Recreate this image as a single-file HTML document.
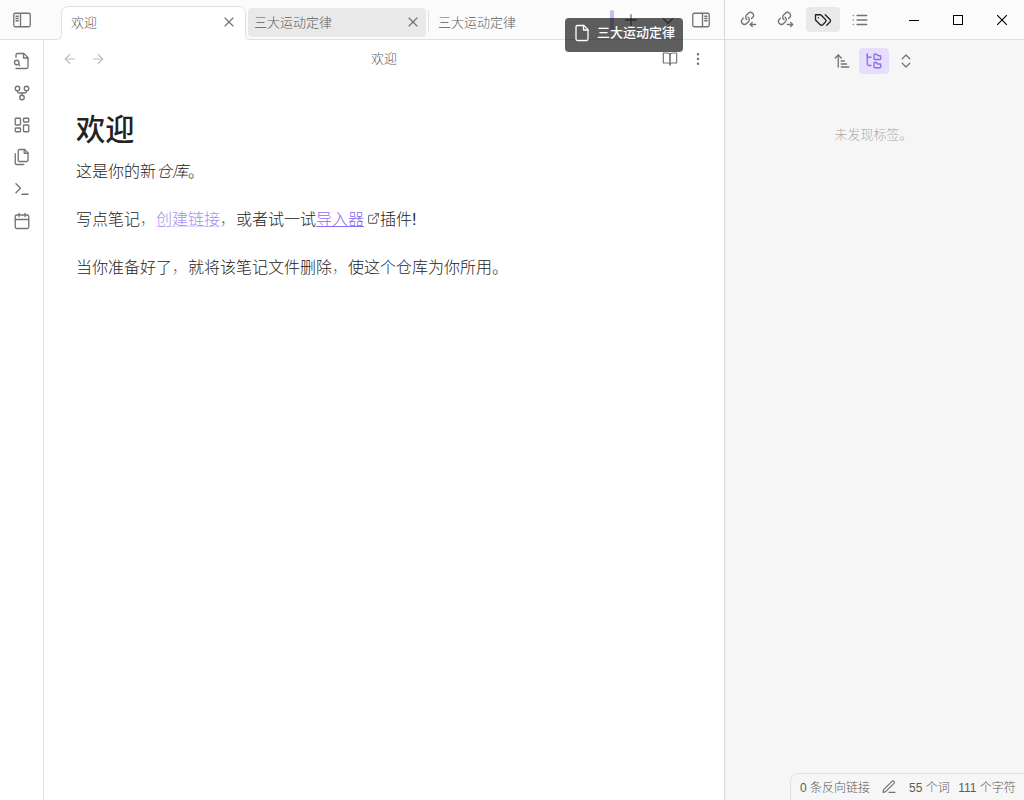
<!DOCTYPE html>
<html lang="zh-CN">
<head>
<meta charset="utf-8">
<title>欢迎 - Obsidian</title>
<style>
*{box-sizing:border-box;margin:0;padding:0}
html,body{width:1024px;height:800px;overflow:hidden;background:#fff}
body{font-family:"Liberation Sans","Noto Sans CJK SC",sans-serif;font-size:13px;font-weight:300;color:#222;position:relative;-webkit-font-smoothing:antialiased}
.abs{position:absolute}
svg.ic{position:absolute;width:18px;height:18px;fill:none;stroke:#5c5c5c;stroke-width:1.75px;stroke-linecap:round;stroke-linejoin:round;opacity:.85;overflow:visible}
svg.faint{stroke:#ababab;opacity:.8}
/* top bar */
#topbar{left:0;top:0;width:724px;height:40px;background:#fbfbfb}
#ribbon{left:0;top:40px;width:44px;height:760px;background:#fff;border-right:1px solid #e0e0e0}
.tabtxt{font-size:13px;line-height:20px;color:#5c5c5c;white-space:nowrap}
#tab2{left:248px;top:8px;width:178px;height:29px;background:#e9e9e9;border-radius:4px}
#sep{left:428px;top:10px;width:1px;height:22px;background:#e0e0e0}
/* main */
#main{left:44px;top:40px;width:680px;height:760px;background:#fff}
#vtitle{left:44px;top:49px;width:680px;text-align:center;font-size:13px;line-height:20px;color:#5c5c5c}
#h1{left:76px;top:113px;font-size:29.2px;line-height:34.6px;font-weight:500;color:#222;white-space:nowrap;letter-spacing:0}
.ln{left:76px;font-size:16px;line-height:24px;color:#222;white-space:nowrap;font-weight:300}
.ln i{font-style:italic}
.cm{font-weight:100;color:#555}
.unres{color:rgba(139,108,239,.8);text-decoration:underline;text-decoration-thickness:1px;text-decoration-color:rgba(139,108,239,.25);text-underline-offset:1px}
.ext{color:#8b6cef;text-decoration:underline;text-decoration-thickness:1px;text-underline-offset:1px}
/* right */
#rdiv{left:724px;top:0;width:1px;height:800px;background:#d9d9d9}
#rtop{left:725px;top:0;width:299px;height:40px;background:#fbfbfb;border-bottom:1px solid #e0e0e0}
#right{left:725px;top:40px;width:299px;height:760px;background:#f6f6f6}
#tagbg{left:806px;top:7px;width:34px;height:25px;border-radius:4px;background:#e9e9e9}
#treebg{left:859px;top:48px;width:30px;height:26px;border-radius:4px;background:#e6defc}
#empty{left:724px;top:125px;width:299px;text-align:center;font-size:13px;line-height:20px;color:#ababab}
/* status */
#status{left:790px;top:773px;width:240px;height:30px;background:#f6f6f6;border:1px solid #e0e0e0;border-radius:8px 0 0 0}
.st{top:779px;font-size:12px;line-height:18px;color:#5c5c5c;white-space:nowrap}
/* drag */
#drop{left:610px;top:10px;width:4px;height:21px;border-radius:2px;background:rgba(139,108,239,.45)}
#ghost{left:565px;top:18px;width:118px;height:34px;border-radius:4px;background:rgba(0,0,0,.63)}
#ghosttxt{left:597px;top:23px;font-size:13px;font-weight:500;line-height:20px;color:#fff;white-space:nowrap}
</style>
</head>
<body>
<header id="titlebar">
<div id="topbar" class="abs"></div>
<svg class="abs" style="left:0;top:0;width:724px;height:40px" viewBox="0 0 724 40"><path d="M0 39.5H57.5A4 4 0 0 0 61.5 35.5V12.5A6 6 0 0 1 67.5 6.5H239.5A6 6 0 0 1 245.5 12.5V35.5A4 4 0 0 0 249.5 39.5H724V40H0Z" fill="#fff" stroke="none"/><path d="M0 39.5H57.5A4 4 0 0 0 61.5 35.5V12.5A6 6 0 0 1 67.5 6.5H239.5A6 6 0 0 1 245.5 12.5V35.5A4 4 0 0 0 249.5 39.5H724" fill="none" stroke="#e0e0e0" stroke-width="1"/></svg>
<svg class="ic" style="left:13px;top:11px;" viewBox="0 0 24 24"><path d="M21 3H3C1.9 3 1 3.9 1 5V19C1 20.1 1.9 21 3 21H21C22.1 21 23 20.1 23 19V5C23 3.9 22.1 3 21 3Z"/><path d="M10 4V20"/><path d="M4 7H7"/><path d="M4 10H7"/><path d="M4 13H7"/></svg>
<div class="abs tabtxt" style="left:71px;top:13px">欢迎</div>
<svg class="ic" style="left:221px;top:14px;width:16px;height:16px;" viewBox="0 0 24 24"><line x1="18" y1="6" x2="6" y2="18"/><line x1="6" y1="6" x2="18" y2="18"/></svg>
<div id="tab2" class="abs"></div>
<div class="abs tabtxt" style="left:254px;top:13px">三大运动定律</div>
<svg class="ic" style="left:405px;top:14px;width:16px;height:16px;" viewBox="0 0 24 24"><line x1="18" y1="6" x2="6" y2="18"/><line x1="6" y1="6" x2="18" y2="18"/></svg>
<div id="sep" class="abs"></div>
<div class="abs tabtxt" style="left:438px;top:13px">三大运动定律</div>
<svg class="ic" style="left:622px;top:11px;" viewBox="0 0 24 24"><line x1="12" y1="5" x2="12" y2="19"/><line x1="5" y1="12" x2="19" y2="12"/></svg>
<svg class="ic" style="left:659px;top:11.7px;" viewBox="0 0 24 24"><polyline points="6 9 12 15 18 9"/></svg>
<svg class="ic" style="left:692px;top:11px;" viewBox="0 0 24 24"><path d="M3 3H21C22.1 3 23 3.9 23 5V19C23 20.1 22.1 21 21 21H3C1.9 21 1 20.1 1 19V5C1 3.9 1.9 3 3 3Z"/><path d="M14 4V20"/><path d="M20 7H17"/><path d="M20 10H17"/><path d="M20 13H17"/></svg>
</header>
<nav id="ribbon-wrap">
<div id="ribbon" class="abs"></div>
<svg class="ic" style="left:13px;top:52px;" viewBox="0 0 24 24"><path d="M4 22h14a2 2 0 0 0 2-2V7.5L14.5 2H6a2 2 0 0 0-2 2v3"/><polyline points="14 2 14 8 20 8"/><path d="M5 17a3 3 0 1 0 0-6 3 3 0 0 0 0 6z"/><path d="m9 18-1.5-1.5"/></svg>
<svg class="ic" style="left:13px;top:84px;" viewBox="0 0 24 24"><circle cx="12" cy="18" r="3"/><circle cx="6" cy="6" r="3"/><circle cx="18" cy="6" r="3"/><path d="M18 9v1a2 2 0 0 1-2 2H8a2 2 0 0 1-2-2V9"/><path d="M12 12v3"/></svg>
<svg class="ic" style="left:13px;top:116px;" viewBox="0 0 24 24"><rect x="3" y="3" width="7" height="9" rx="1"/><rect x="14" y="3" width="7" height="5" rx="1"/><rect x="14" y="12" width="7" height="9" rx="1"/><rect x="3" y="16" width="7" height="5" rx="1"/></svg>
<svg class="ic" style="left:13px;top:148px;" viewBox="0 0 24 24"><path d="M15.5 2H8.6c-.4 0-.8.2-1.1.5-.3.3-.5.7-.5 1.1v12.8c0 .4.2.8.5 1.1.3.3.7.5 1.1.5h9.8c.4 0 .8-.2 1.1-.5.3-.3.5-.7.5-1.1V6.5L15.5 2z"/><path d="M3 7.6v12.8c0 .4.2.8.5 1.1.3.3.7.5 1.1.5h9.8"/><path d="M15 2v5h5"/></svg>
<svg class="ic" style="left:13px;top:180px;" viewBox="0 0 24 24"><polyline points="4 17 10 11 4 5"/><line x1="12" y1="19" x2="20" y2="19"/></svg>
<svg class="ic" style="left:13px;top:212px;" viewBox="0 0 24 24"><rect x="3" y="4" width="18" height="18" rx="2" ry="2"/><line x1="16" y1="2" x2="16" y2="6"/><line x1="8" y1="2" x2="8" y2="6"/><line x1="3" y1="10" x2="21" y2="10"/></svg>
</nav>
<main id="workspace">
<div id="main" class="abs"></div>
<svg class="ic faint" style="left:62px;top:51px;width:16px;height:16px;" viewBox="0 0 24 24"><line x1="19" y1="12" x2="5" y2="12"/><polyline points="12 19 5 12 12 5"/></svg>
<svg class="ic faint" style="left:90px;top:51px;width:16px;height:16px;" viewBox="0 0 24 24"><line x1="5" y1="12" x2="19" y2="12"/><polyline points="12 5 19 12 12 19"/></svg>
<div id="vtitle" class="abs">欢迎</div>
<svg class="ic" style="left:662px;top:51px;width:16px;height:16px;" viewBox="0 0 24 24"><path d="M2 3h6a4 4 0 0 1 4 4v14a3 3 0 0 0-3-3H2z"/><path d="M22 3h-6a4 4 0 0 0-4 4v14a3 3 0 0 1 3-3h7z"/></svg>
<svg class="ic" style="left:690px;top:51px;width:16px;height:16px;" viewBox="0 0 24 24"><circle cx="12" cy="12" r="1"/><circle cx="12" cy="5" r="1"/><circle cx="12" cy="19" r="1"/></svg>
<div id="h1" class="abs">欢迎</div>
<div class="abs ln" style="top:160px">这是你的新<i>仓库</i>。</div>
<div class="abs ln" style="top:208px">写点笔记<span class="cm">，</span><span class="unres">创建链接</span><span class="cm">，</span>或者试一试<span class="ext">导入器</span><span style="display:inline-block;width:16px"></span>插件!</div>
<svg class="ic" style="left:366.6px;top:212px;width:13px;height:13px;stroke-width:2px;opacity:.9;" viewBox="0 0 24 24"><path d="M18 13v6a2 2 0 0 1-2 2H5a2 2 0 0 1-2-2V8a2 2 0 0 1 2-2h6"/><polyline points="15 3 21 3 21 9"/><line x1="10" y1="14" x2="21" y2="3"/></svg>
<div class="abs ln" style="top:256px">当你准备好了<span class="cm">，</span>就将该笔记文件删除<span class="cm">，</span>使这个仓库为你所用。</div>
</main>
<aside id="sidebar-right">
<div id="rtop" class="abs"></div>
<div id="right" class="abs"></div>
<div id="rdiv" class="abs"></div>
<svg class="ic" style="left:739px;top:10px;" viewBox="0 0 24 24"><g transform="translate(1.7 1.6) scale(0.8) matrix(0 -1 -1 0 24 24)" stroke-width="2.19"><path d="M10 13a5 5 0 0 0 7.54.54l3-3a5 5 0 0 0-7.07-7.07l-1.72 1.71"/><path d="M14 11a5 5 0 0 0-7.54-.54l-3 3a5 5 0 0 0 7.07 7.07l1.71-1.71"/></g><path d="M22.2 19.3H15"/><path d="M17.7 22.1L15 19.3L17.7 16.5"/></svg>
<svg class="ic" style="left:776px;top:10px;" viewBox="0 0 24 24"><g transform="translate(1.7 1.6) scale(0.8) matrix(0 -1 -1 0 24 24)" stroke-width="2.19"><path d="M10 13a5 5 0 0 0 7.54.54l3-3a5 5 0 0 0-7.07-7.07l-1.72 1.71"/><path d="M14 11a5 5 0 0 0-7.54-.54l-3 3a5 5 0 0 0 7.07 7.07l1.71-1.71"/></g><path d="M15 19.3H22.2"/><path d="M19.5 22.1L22.2 19.3L19.5 16.5"/></svg>
<div id="tagbg" class="abs"></div>
<svg class="ic" style="left:814px;top:11px;stroke:#222;opacity:1;" viewBox="0 0 24 24"><path d="M9 5H2v7l6.29 6.29c.94.94 2.48.94 3.42 0l3.58-3.58c.94-.94.94-2.48 0-3.42L9 5Z"/><path d="M6 9.01V9"/><path d="m15 5 6.3 6.3a2.4 2.4 0 0 1 0 3.4L17 19"/></svg>
<svg class="ic" style="left:851px;top:11px;" viewBox="0 0 24 24"><line x1="8" y1="6" x2="21" y2="6"/><line x1="8" y1="12" x2="21" y2="12"/><line x1="8" y1="18" x2="21" y2="18"/><line x1="3" y1="6" x2="3.01" y2="6"/><line x1="3" y1="12" x2="3.01" y2="12"/><line x1="3" y1="18" x2="3.01" y2="18"/></svg>
<svg class="abs" style="left:909px;top:15px;width:10px;height:10px" viewBox="0 0 10 10"><path d="M0 5.5H10" stroke="#000" stroke-width="1" fill="none"/></svg>
<svg class="abs" style="left:953px;top:15px;width:10px;height:10px" viewBox="0 0 10 10"><rect x="0.5" y="0.5" width="9" height="9" stroke="#000" stroke-width="1" fill="none"/></svg>
<svg class="abs" style="left:997px;top:15px;width:10px;height:10px" viewBox="0 0 10 10"><path d="M0 0L10 10M10 0L0 10" stroke="#000" stroke-width="1.1" fill="none"/></svg>
<svg class="ic" style="left:833px;top:52px;" viewBox="0 0 24 24"><path d="m3 8 4-4 4 4"/><path d="M7 4v16"/><path d="M11 12h4"/><path d="M11 16h7"/><path d="M11 20h10"/></svg>
<div id="treebg" class="abs"></div>
<svg class="ic" style="left:865px;top:52px;stroke:#8b6cef;opacity:1;" viewBox="0 0 24 24"><path d="M13 10h7a1 1 0 0 0 1-1V6a1 1 0 0 0-1-1h-2.5a1 1 0 0 1-.8-.4l-.9-1.2A1 1 0 0 0 15 3h-2a1 1 0 0 0-1 1v5a1 1 0 0 0 1 1Z"/><path d="M13 21h7a1 1 0 0 0 1-1v-3a1 1 0 0 0-1-1h-2.88a1 1 0 0 1-.9-.55l-.44-.9a1 1 0 0 0-.9-.55H13a1 1 0 0 0-1 1v5a1 1 0 0 0 1 1Z"/><path d="M3 3v2c0 1.1.9 2 2 2h3"/><path d="M3 3v13c0 1.1.9 2 2 2h3"/></svg>
<svg class="ic" style="left:897px;top:52px;" viewBox="0 0 24 24"><path d="m7 15 5 5 5-5"/><path d="m7 9 5-5 5 5"/></svg>
<div id="empty" class="abs">未发现标签。</div>
</aside>
<footer id="statusbar">
<div id="status" class="abs"></div>
<div class="abs st" style="left:800px">0 条反向链接</div>
<svg class="ic" style="left:881px;top:779px;width:16px;height:16px;" viewBox="0 0 24 24"><path d="M12 20h9"/><path d="M16.5 3.5a2.121 2.121 0 0 1 3 3L7 19l-4 1 1-4L16.5 3.5z"/></svg>
<div class="abs st" style="left:909px">55 个词</div>
<div class="abs st" style="left:958.3px">111 个字符</div>
</footer>
<div id="drag-overlay">
<div id="drop" class="abs"></div>
<div id="ghost" class="abs"></div>
<svg class="ic" style="left:573px;top:24px;stroke:#fff;opacity:1;" viewBox="0 0 24 24"><path d="M14.5 2H6a2 2 0 0 0-2 2v16a2 2 0 0 0 2 2h12a2 2 0 0 0 2-2V7.5L14.5 2z"/><polyline points="14 2 14 8 20 8"/></svg>
<div id="ghosttxt" class="abs">三大运动定律</div>
</div>
</body>
</html>
